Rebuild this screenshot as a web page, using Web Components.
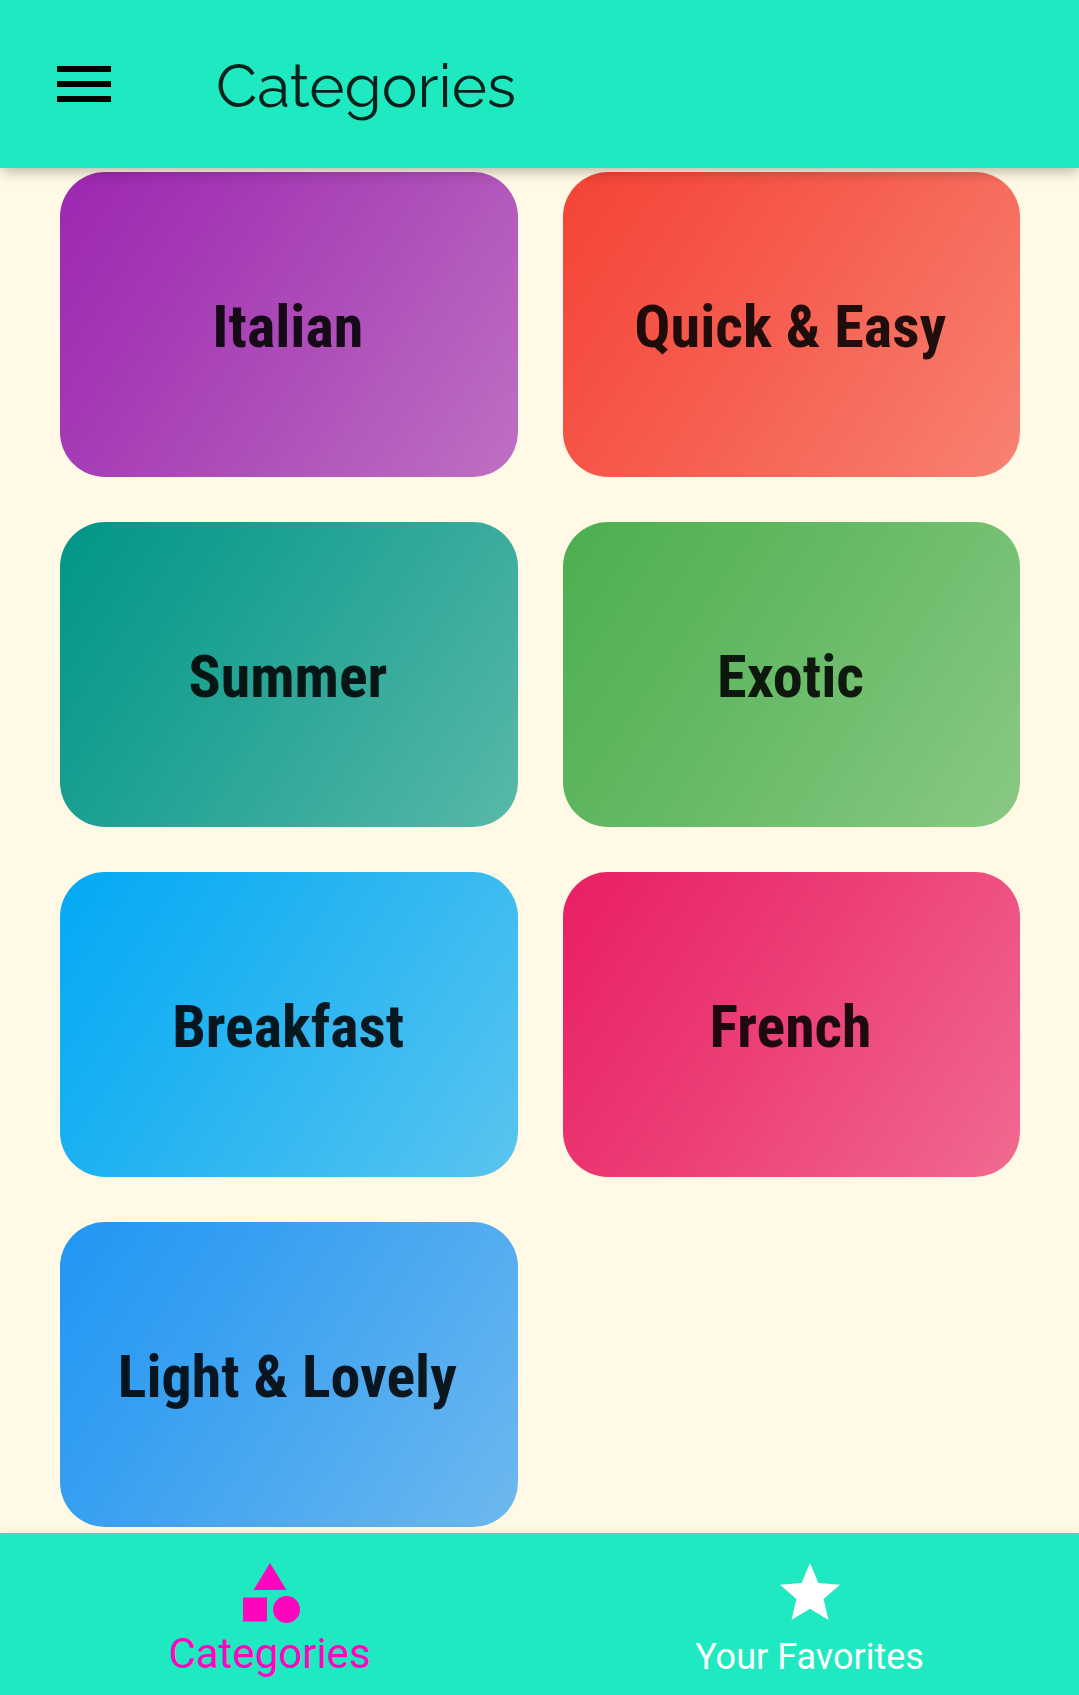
<!DOCTYPE html>
<html lang="en">
<head>
<meta charset="utf-8">
<title>Categories</title>
<style>
html, body { margin: 0; height: 100%; overflow: hidden; background: #fff9e5; }
</style>
</head>
<body>
<meals-app></meals-app>
<script>
const define = (name, html, setup) => {
  const template = document.createElement('template');
  template.innerHTML = html;
  customElements.define(name, class extends HTMLElement {
    connectedCallback() {
      if (this.shadowRoot) return;
      this.attachShadow({ mode: 'open' }).append(template.content.cloneNode(true));
      if (setup) setup(this, this.shadowRoot);
    }
  });
};

// Text squeezed or widened horizontally to a given width.
define('fit-label', `
<style>
:host { display: block; white-space: nowrap; }
span { display: inline-block; transform-origin: var(--origin, 50%) 50%; }
</style><span><slot></slot></span>`, (host, root) => {
  const span = root.querySelector('span');
  span.style.transform = 'scaleX(' + Number(host.getAttribute('width')) / span.getBoundingClientRect().width + ')';
});

define('menu-icon', `
<style>:host { display: block; width: 72px; height: 72px; } svg { display: block; }</style>
<svg width="72" height="72" viewBox="0 0 24 24" shape-rendering="crispEdges"><path d="M3 18h18v-2H3v2zm0-5h18v-2H3v2zm0-7v2h18V6H3z"/></svg>`);

define('shapes-icon', `
<style>:host { display: block; width: 72px; height: 72px; } svg { display: block; }</style>
<svg width="72" height="72" viewBox="0 0 24 24" fill="currentColor"><path d="M12 2l-5.5 9h11z"/><circle cx="17.5" cy="17.5" r="4.5"/><path d="M3 13.5h8v8H3z"/></svg>`);

define('star-icon', `
<style>:host { display: block; width: 72px; height: 72px; } svg { display: block; }</style>
<svg width="72" height="72" viewBox="0 0 24 24" fill="currentColor"><path d="M12 17.27L18.18 21l-1.64-7.03L22 9.24l-7.19-.61L12 2 9.19 8.63 2 9.24l5.46 4.73L5.82 21z"/></svg>`);

define('app-bar', `
<style>
:host { display: flex; align-items: center; box-sizing: border-box; height: 168px; flex: none; padding-left: 48px;
  gap: 96px; background: #1ee9c0; position: relative; z-index: 1;
  box-shadow: 0 6px 12px -3px rgba(0,0,0,.2), 0 3px 16px rgba(0,0,0,.10); }
fit-label { --origin: 0; font: 400 60px/72px Raleway, Lato, "Open Sans", sans-serif; color: #04211c; padding-top: 3px; }
</style>
<menu-icon></menu-icon><fit-label width="300"><slot></slot></fit-label>`);

define('food-card', `
<style>
:host { display: flex; align-items: center; justify-content: center; box-sizing: border-box; height: 305px;
  border-radius: 45px; padding: 4px 2px 0 0;
  background: linear-gradient(123.69deg, rgb(var(--tone)), 53%, rgb(var(--tone) / .65)); }
fit-label { font: 700 59.5px/70px "Roboto Condensed", Roboto, sans-serif; font-stretch: 75%; color: rgba(0,0,0,.87); }
</style>
<fit-label><slot></slot></fit-label>`, (host, root) => {
  host.style.setProperty('--tone', host.getAttribute('tone'));
  const old = root.querySelector('fit-label');
  const label = document.createElement('fit-label');
  label.setAttribute('width', host.getAttribute('label-width'));
  label.append(document.createElement('slot'));
  old.replaceWith(label);
});

define('category-grid', `
<style>
:host { display: grid; grid-template-columns: 457.5px 457.5px; gap: 45px; padding: 4px 60px 0; flex: 1; align-content: start; }
</style><slot></slot>`);

define('tab-item', `
<style>
:host { flex: 1; display: flex; flex-direction: column; align-items: center; padding-top: 24px;
  font: 400 36px/42px Roboto, sans-serif; color: #fff; }
:host([active]) { font-size: 42px; line-height: 48px; color: #ff05be; }
div { padding-top: var(--label-gap, 6px); padding-right: 1px; }
</style>
<slot name="icon"></slot><div><slot></slot></div>`);

define('tab-bar', `
<style>
:host { display: flex; height: 162px; flex: none; background: #1ee9c0; box-shadow: 0 0 12px rgba(0,0,0,.09); }
</style><slot></slot>`);

const cards = [
  ['Italian', '156 39 176', 151], ['Quick &amp; Easy', '244 67 54', 312],
  ['Summer', '0 150 136', 199], ['Exotic', '76 175 80', 147],
  ['Breakfast', '3 169 244', 232], ['French', '233 30 99', 162],
  ['Light &amp; Lovely', '33 150 243', 339]
];

customElements.define('meals-app', class extends HTMLElement {
  connectedCallback() {
    this.attachShadow({ mode: 'open' }).innerHTML = `
<style>
:host { display: flex; flex-direction: column; width: 1080px; height: 1695px; overflow: hidden; background: #fff9e5; }
</style>
<app-bar>Categories</app-bar>
<category-grid>${cards.map(([n, t, w]) => `<food-card tone="${t}" label-width="${w}">${n}</food-card>`).join('')}</category-grid>
<tab-bar>
  <tab-item active style="--label-gap:1px"><shapes-icon slot="icon"></shapes-icon>Categories</tab-item>
  <tab-item style="--label-gap:7px"><star-icon slot="icon"></star-icon>Your Favorites</tab-item>
</tab-bar>`;
  }
});
</script>
</body>
</html>
